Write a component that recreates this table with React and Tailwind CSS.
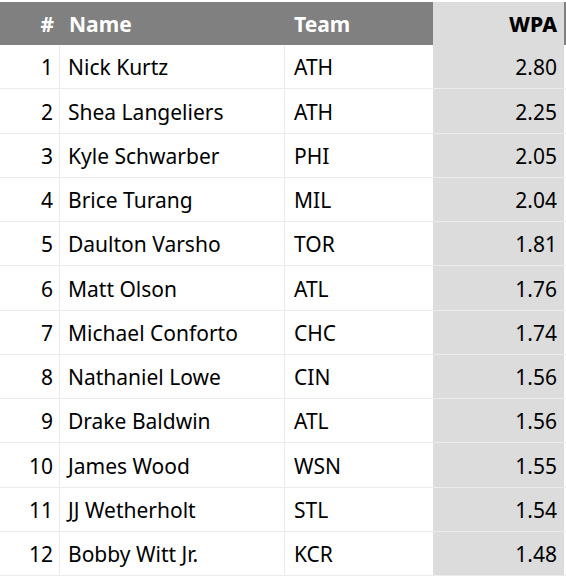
const rows = [
  [1, "Nick Kurtz", "ATH", "2.80"],
  [2, "Shea Langeliers", "ATH", "2.25"],
  [3, "Kyle Schwarber", "PHI", "2.05"],
  [4, "Brice Turang", "MIL", "2.04"],
  [5, "Daulton Varsho", "TOR", "1.81"],
  [6, "Matt Olson", "ATL", "1.76"],
  [7, "Michael Conforto", "CHC", "1.74"],
  [8, "Nathaniel Lowe", "CIN", "1.56"],
  [9, "Drake Baldwin", "ATL", "1.56"],
  [10, "James Wood", "WSN", "1.55"],
  [11, "JJ Wetherholt", "STL", "1.54"],
  [12, "Bobby Witt Jr.", "KCR", "1.48"],
];

export default function App() {
  return (
    <div className="w-[566px] bg-white pt-[2px] font-['Noto_Sans',sans-serif] text-[21px] text-black">
      {/* header */}
      <div className="grid h-[43px] grid-cols-[60px_225px_148px_131px_2px] items-center text-[21px] font-bold">
        <div className="flex h-full items-center justify-end bg-[#808080] pr-[6px] pt-[2px] text-white">#</div>
        <div className="flex h-full items-center bg-[#808080] pl-[9px] pt-[2px] text-white">Name</div>
        <div className="flex h-full items-center bg-[#808080] pl-[9px] pt-[2px] text-white">Team</div>
        <div className="flex h-full items-center justify-end bg-[#dcdcdc] pr-[7px] pt-[2px] font-extrabold">WPA</div>
        <div className="h-full bg-[#808080]" />
      </div>
      {rows.map(([rank, name, team, wpa]) => (
        <div
          key={rank}
          className="grid h-[44.25px] grid-cols-[60px_225px_148px_131px] border-b border-[#ebebeb]"
        >
          <div className="flex items-center justify-end border-r border-[#ebebeb] pr-[6px] pt-[3px]">{rank}</div>
          <div className="flex items-center border-r border-[#ebebeb] pl-[8px] pt-[3px]">{name}</div>
          <div className="flex items-center pl-[9px] pt-[3px]">{team}</div>
          <div className="flex items-center justify-end bg-[#dcdcdc] pr-[7px] pt-[3px]">{wpa}</div>
        </div>
      ))}
    </div>
  );
}
